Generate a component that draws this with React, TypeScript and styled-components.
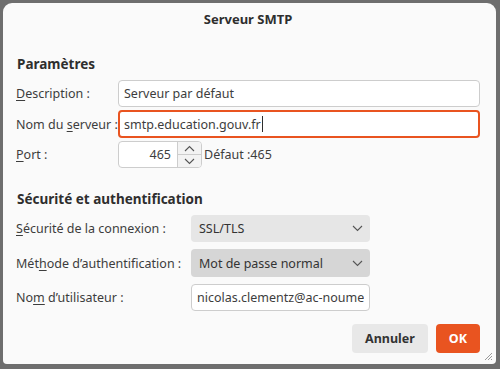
import React from "react";
import styled, { createGlobalStyle } from "styled-components";

const GlobalStyle = createGlobalStyle`
  html, body {
    margin: 0;
    padding: 0;
    background: #6e6e6e;
    font-family: "Noto Sans", "Open Sans", sans-serif;
    font-size: 12.5px;
    color: #3d3d3d;
  }
`;

const Chevron = ({ up }: { up?: boolean }) => (
  <svg width="11" height="7" viewBox="0 0 11 7">
    <path
      d={up ? "M1 6 L5.5 1.5 L10 6" : "M1 1 L5.5 5.5 L10 1"}
      fill="none"
      stroke="#555"
      strokeWidth="1.1"
    />
  </svg>
);

export default function App() {
  return (
    <>
      <GlobalStyle />
      <Screen>
        <Dialog>
          <TitleBar>Serveur SMTP</TitleBar>

          <Heading>Paramètres</Heading>
          <Form labelWidth={102}>
            <Label>
              <u>D</u>escription :
            </Label>
            <TextField value="Serveur par défaut" readOnly />
            <Label>
              Nom du <u>s</u>erveur :
            </Label>
            <FocusedField>
              smtp.education.gouv.fr<Caret />
            </FocusedField>
            <Label>
              <u>P</u>ort :
            </Label>
            <PortRow>
              <SpinBox>
                <SpinValue>465</SpinValue>
                <SpinButtons>
                  <SpinButton>
                    <Chevron up />
                  </SpinButton>
                  <SpinButton>
                    <Chevron />
                  </SpinButton>
                </SpinButtons>
              </SpinBox>
              <span>Défaut :465</span>
            </PortRow>
          </Form>

          <Heading second>Sécurité et authentification</Heading>
          <Form labelWidth={175} rowGap={7} narrow>
            <Label>
              <u>S</u>écurité de la connexion :
            </Label>
            <Select>
              SSL/TLS
              <Chevron />
            </Select>
            <Label>
              Mét<u>h</u>ode d’authentification :
            </Label>
            <Select hovered>
              Mot de passe normal
              <Chevron />
            </Select>
            <Label>
              No<u>m</u> d’utilisateur :
            </Label>
            <TextField value="nicolas.clementz@ac-noumea.nc" readOnly />
          </Form>

          <Actions>
            <Button>Annuler</Button>
            <Button primary>OK</Button>
          </Actions>
          <Grip>
            <svg width="9" height="9" viewBox="0 0 9 9">
              <path d="M8 1 L1 8 M8 4 L4 8 M8 7 L7 8" stroke="#9a9a9a" strokeWidth="1" />
            </svg>
          </Grip>
        </Dialog>
      </Screen>
    </>
  );
}

const Screen = styled.div`
  width: 500px;
  height: 369px;
  padding: 3px 4px 5px 3px;
  box-sizing: border-box;
`;

const Dialog = styled.div`
  position: relative;
  height: 100%;
  background: #fafafa;
  border-radius: 9px 9px 4px 4px;
  padding: 0 16px 0 13px;
  box-sizing: border-box;
  display: flex;
  flex-direction: column;
`;

const TitleBar = styled.div`
  height: 31px;
  display: flex;
  align-items: center;
  justify-content: center;
  font-size: 13px;
  font-weight: bold;
  color: #2e2e2e;
`;

const Heading = styled.div<{ second?: boolean }>`
  margin-top: ${(p) => (p.second ? "22px" : "21px")};
  margin-left: 1px;
  font-size: 13.5px;
  font-weight: bold;
  color: #2e2e2e;
  line-height: 18px;
`;

const Form = styled.div<{ labelWidth: number; rowGap?: number; narrow?: boolean }>`
  display: grid;
  grid-template-columns: ${(p) => p.labelWidth}px ${(p) => (p.narrow ? "179px" : "1fr")};
  row-gap: ${(p) => p.rowGap ?? 3}px;
  margin-top: 7px;
  align-items: center;
`;

const Label = styled.label`
  white-space: nowrap;
  u {
    text-underline-offset: 2px;
  }
`;

const TextField = styled.input`
  height: 27px;
  box-sizing: border-box;
  border: 1px solid #cdcdcd;
  border-radius: 4px;
  background: #fff;
  padding: 0 5px;
  font: inherit;
  color: #3d3d3d;
  outline: none;
  min-width: 0;
`;

const FocusedField = styled.div`
  height: 28px;
  box-sizing: border-box;
  border: 2px solid #e95420;
  border-radius: 4px;
  background: #fff;
  padding: 0 4px;
  display: flex;
  align-items: center;
  color: #3d3d3d;
`;

const Caret = styled.span`
  display: inline-block;
  width: 1px;
  height: 16px;
  background: #2e2e2e;
  margin-left: 1px;
`;

const PortRow = styled.div`
  display: flex;
  align-items: center;
  gap: 2px;
`;

const SpinBox = styled.div`
  width: 84px;
  height: 27px;
  box-sizing: border-box;
  border: 1px solid #cdcdcd;
  border-radius: 4px;
  background: #fff;
  display: flex;
  overflow: hidden;
`;

const SpinValue = styled.div`
  flex: 1;
  display: flex;
  align-items: center;
  justify-content: flex-end;
  padding-right: 6px;
`;

const SpinButtons = styled.div`
  width: 23px;
  display: flex;
  flex-direction: column;
  border-left: 1px solid #cdcdcd;
  background: #f3f3f3;
`;

const SpinButton = styled.div`
  flex: 1;
  display: flex;
  align-items: center;
  justify-content: center;
  & + & {
    border-top: 1px solid #cdcdcd;
  }
`;

const Select = styled.div<{ hovered?: boolean }>`
  height: ${(p) => (p.hovered ? 28 : 27)}px;
  box-sizing: border-box;
  border-radius: 4px;
  background: ${(p) => (p.hovered ? "#d6d6d6" : "#e6e6e6")};
  display: flex;
  align-items: center;
  justify-content: space-between;
  padding: 0 7px 0 8px;
  color: #333;
`;

const Actions = styled.div`
  display: flex;
  justify-content: flex-end;
  gap: 8px;
  margin-top: 13px;
`;

const Button = styled.div<{ primary?: boolean }>`
  height: 29px;
  padding: 0 13px;
  display: flex;
  align-items: center;
  border-radius: 4px;
  font-size: 12.5px;
  font-weight: bold;
  background: ${(p) => (p.primary ? "#e95420" : "#e8e8e8")};
  color: ${(p) => (p.primary ? "#fff" : "#333")};
`;

const Grip = styled.div`
  position: absolute;
  right: 3px;
  bottom: 3px;
  line-height: 0;
`;
